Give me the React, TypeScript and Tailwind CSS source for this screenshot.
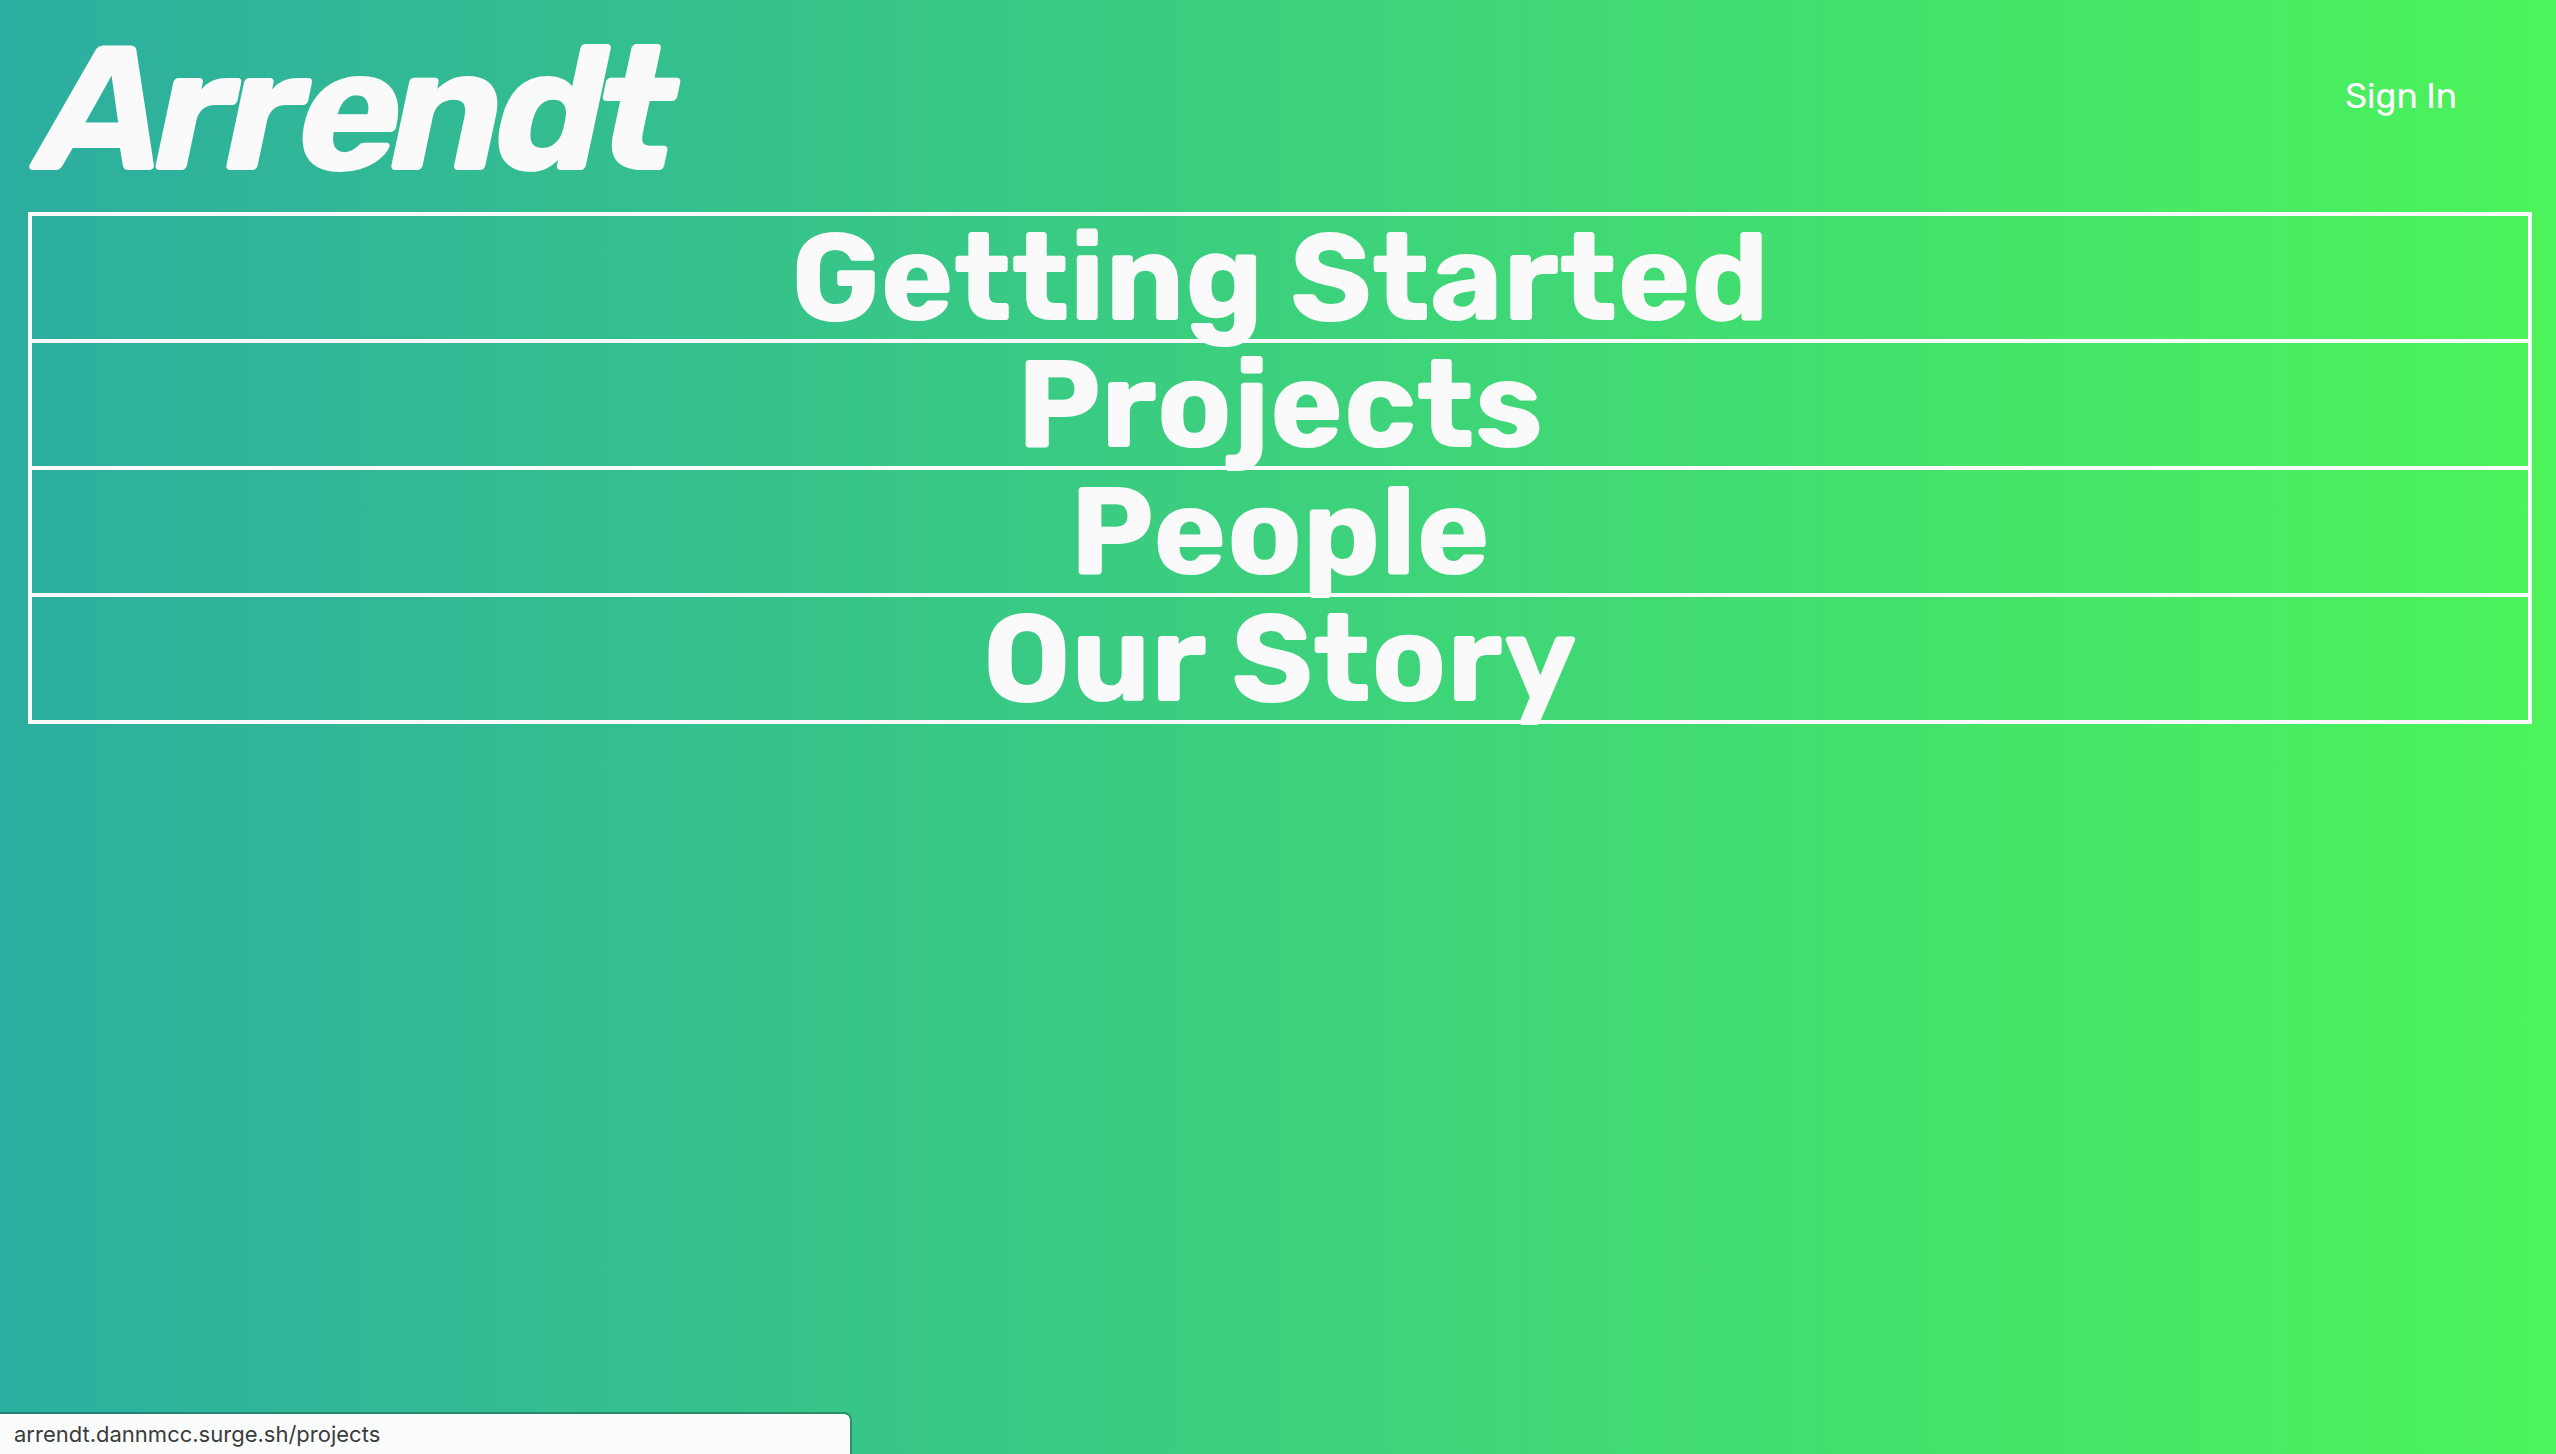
const items = [
  { label: "Getting Started", href: "#getting-started" },
  { label: "Projects", href: "#projects" },
  { label: "People", href: "#people" },
  { label: "Our Story", href: "#our-story" },
];

export default function App() {
  return (
    <div className="relative flex min-h-screen flex-col bg-linear-to-r/srgb from-[#2caea0] to-[#4cf35a] font-['Rubik','Inter',sans-serif] text-[#fafafa]">
      <header className="flex h-[212px] items-start justify-between pr-[99px] pl-[38px]">
        <h1 className="pt-[7px] text-[177px] leading-[206px] font-bold italic tracking-[-10px]">Arrendt</h1>
        <a href="#signin" className="pt-[76px] text-[35px] leading-10 text-white">Sign In</a>
      </header>
      <nav className="mr-6 ml-7 border-x-4 border-t-4 border-[#fafafa]">
        {items.map((item) => (
          <a
            key={item.label}
            href={item.href}
            className="block h-[127px] border-b-4 border-[#fafafa] text-center text-[124px] leading-[123px] font-bold"
          >
            {item.label}
          </a>
        ))}
      </nav>
      <div className="absolute bottom-0 left-0 h-[42px] w-[852px] rounded-tr-lg border-t-2 border-r-2 border-black/25 bg-[#fafdfc] bg-clip-padding pl-[14px] font-['Inter',sans-serif] text-[22px] leading-10 text-[#3c3c3c]">arrendt.dannmcc.surge.sh/projects</div>
    </div>
  );
}
